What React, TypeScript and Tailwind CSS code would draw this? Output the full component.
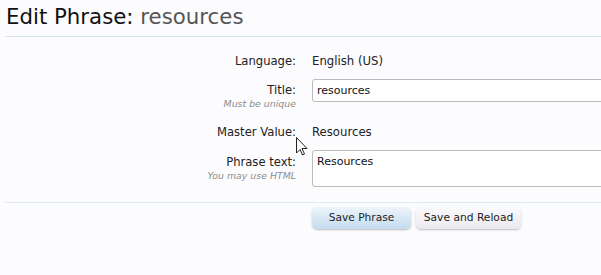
function Row({ label, hint, children, className = '' }: { label: string; hint?: string; children: React.ReactNode; className?: string }) {
    return (
        <div className={`flex ${className}`}>
            <div className="w-[296px] shrink-0 text-right">
                <div className="text-[11.6px] leading-[16px] text-[#222]">{label}</div>
                {hint && <div className="text-[9.4px] leading-[12px] italic text-[#8c8c8c]">{hint}</div>}
            </div>
            <div className="ml-4 flex-1 min-w-0">{children}</div>
        </div>
    )
}

export default function App() {
    return (
        <div className="relative h-[275px] w-[601px] overflow-hidden bg-[#fcfcff] font-['DejaVu_Sans',sans-serif]">
            <h1 className="pl-[6px] pt-[3px] text-[21.3px] leading-[28px] text-[#111]">
                Edit Phrase: <span className="text-[#555]">resources</span>
            </h1>
            <div className="ml-[5px] mt-[5px] h-px bg-[#d6e4f0]" />

            <div className="pt-[16px]">
                <Row label="Language:">
                    <div className="text-[11.7px] leading-[16px] text-[#222]">English (US)</div>
                </Row>
                <Row label="Title:" hint="Must be unique" className="mt-[13px]">
                    <input
                        readOnly
                        value="resources"
                        className="-mt-[3px] block h-[23px] w-[320px] rounded-[3px] border border-[#bbb] bg-white px-[4px] text-[11px] text-[#111] outline-none"
                    />
                </Row>
                <Row label="Master Value:" className="mt-[14px]">
                    <div className="text-[11.7px] leading-[16px] text-[#222]">Resources</div>
                </Row>
                <Row label="Phrase text:" hint="You may use HTML" className="mt-[14px]">
                    <textarea
                        readOnly
                        value="Resources"
                        className="-mt-[4px] block h-[37px] w-[320px] resize-none rounded-[3px] border border-[#bbb] bg-white px-[4px] py-[3px] text-[11px] leading-[16px] text-[#111] outline-none"
                    />
                </Row>
            </div>

            <div className="ml-[5px] mt-[15px] h-px bg-[#dcebf2]" />

            <div className="flex gap-[5px] pl-[312px] pt-[4px]">
                <button className="h-[22px] w-[99px] rounded-[5px] bg-gradient-to-b from-[#eef4fa] to-[#c3dcee] text-[10.6px] text-[#222] shadow-[0_1px_2px_rgba(0,0,0,0.25)]">
                    Save Phrase
                </button>
                <button className="h-[22px] w-[105px] rounded-[5px] bg-gradient-to-b from-[#fbfbfd] to-[#e9e9f0] text-[10.7px] text-[#222] shadow-[0_1px_2px_rgba(0,0,0,0.25)]">
                    Save and Reload
                </button>
            </div>

            <svg className="absolute left-[296px] top-[137px]" width="12" height="19" viewBox="0 0 12 19">
                <path d="M0.5 0.5 L0.5 16 L4 12.5 L6.5 18 L8.5 17 L6 11.5 L11 11.5 Z" fill="#fff" stroke="#222" strokeWidth="1" strokeLinejoin="round" />
            </svg>
        </div>
    )
}
